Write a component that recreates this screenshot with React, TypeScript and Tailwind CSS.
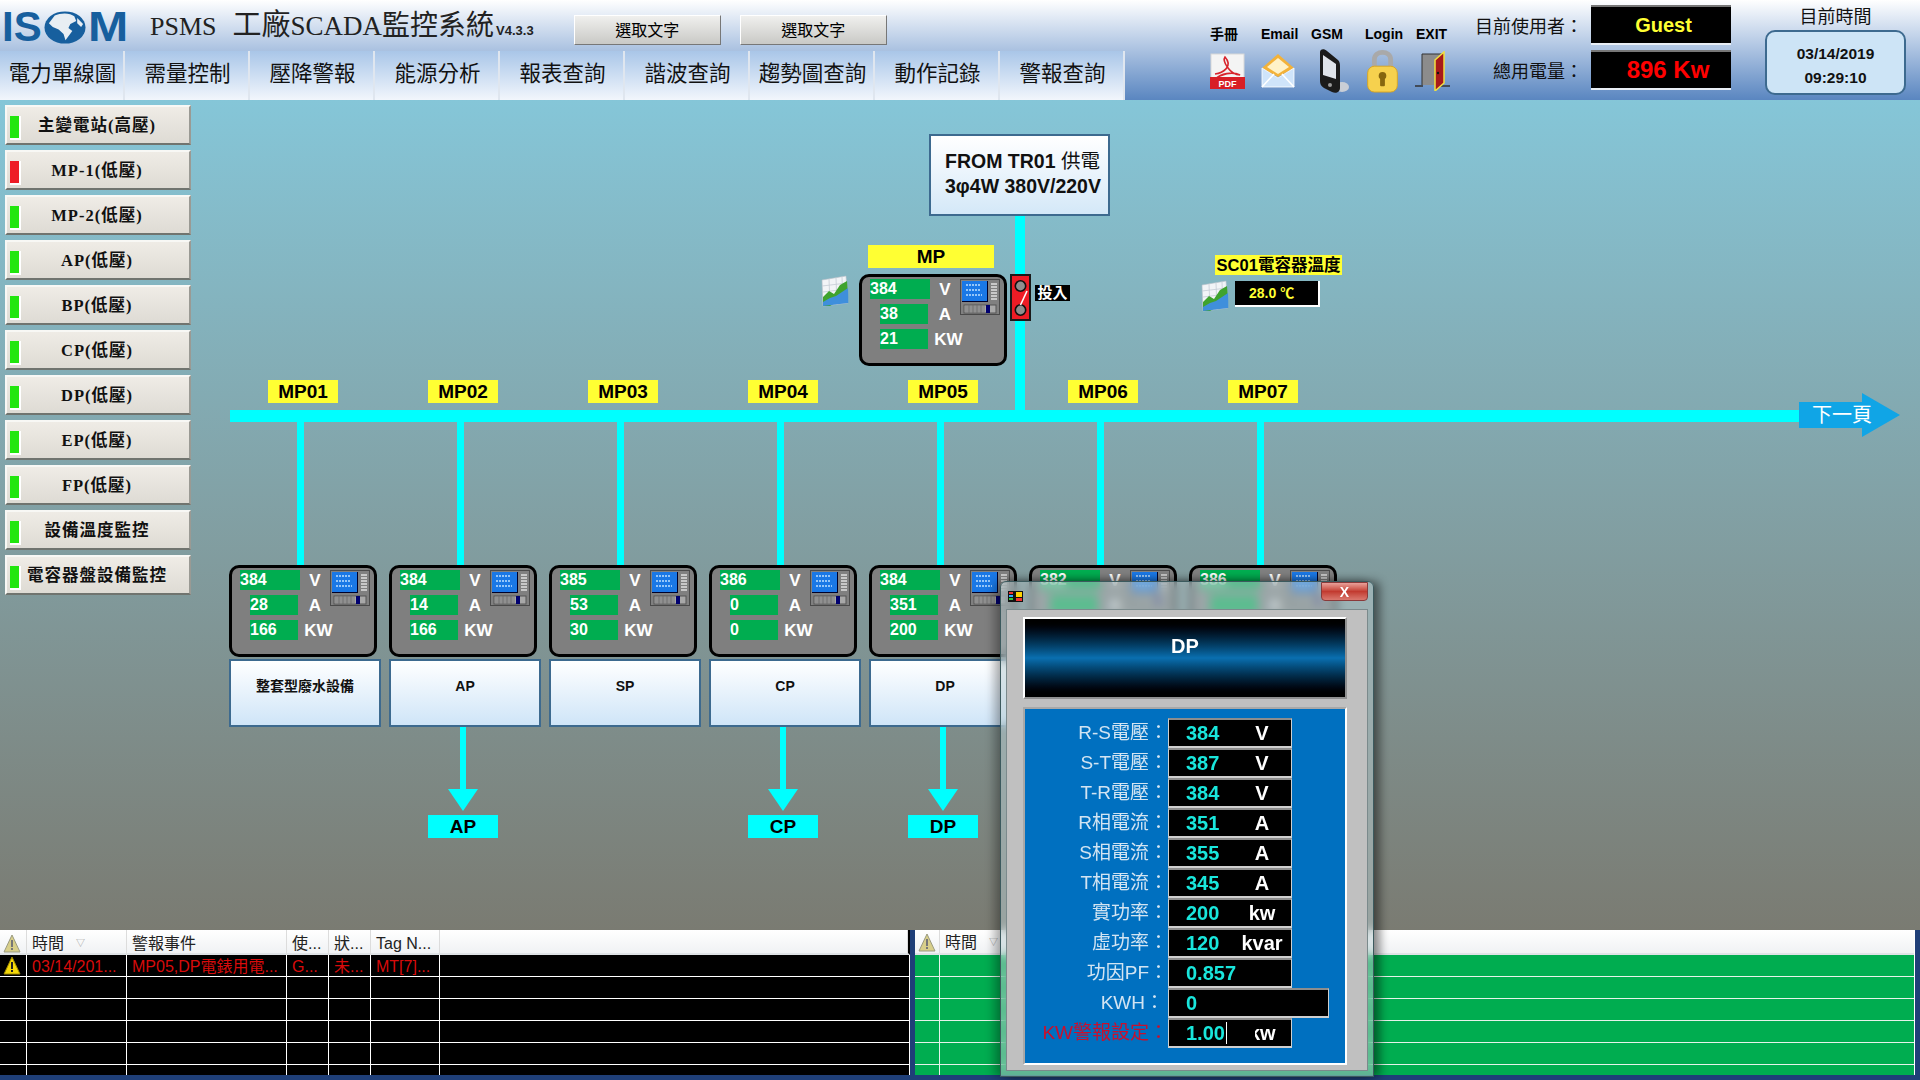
const SANS = "font-['Liberation_Sans','Noto_Sans_CJK_TC',sans-serif]";

const navItems = ["電力單線圖", "需量控制", "壓降警報", "能源分析", "報表查詢", "諧波查詢", "趨勢圖查詢", "動作記錄", "警報查詢"];

const sideItems = [
  { label: "主變電站(高壓)", ok: true },
  { label: "MP-1(低壓)", ok: false },
  { label: "MP-2(低壓)", ok: true },
  { label: "AP(低壓)", ok: true },
  { label: "BP(低壓)", ok: true },
  { label: "CP(低壓)", ok: true },
  { label: "DP(低壓)", ok: true },
  { label: "EP(低壓)", ok: true },
  { label: "FP(低壓)", ok: true },
  { label: "設備溫度監控", ok: true },
  { label: "電容器盤設備監控", ok: true },
];

const feeders = [
  { tag: "MP01", v: "384", a: "28", kw: "166", name: "整套型廢水設備", out: "" },
  { tag: "MP02", v: "384", a: "14", kw: "166", name: "AP", out: "AP" },
  { tag: "MP03", v: "385", a: "53", kw: "30", name: "SP", out: "" },
  { tag: "MP04", v: "386", a: "0", kw: "0", name: "CP", out: "CP" },
  { tag: "MP05", v: "384", a: "351", kw: "200", name: "DP", out: "DP" },
  { tag: "MP06", v: "382", a: "", kw: "", name: "", out: "" },
  { tag: "MP07", v: "386", a: "", kw: "", name: "", out: "" },
];

const readings = [
  { label: "R-S電壓：", value: "384", unit: "V" },
  { label: "S-T電壓：", value: "387", unit: "V" },
  { label: "T-R電壓：", value: "384", unit: "V" },
  { label: "R相電流：", value: "351", unit: "A" },
  { label: "S相電流：", value: "355", unit: "A" },
  { label: "T相電流：", value: "345", unit: "A" },
  { label: "實功率：", value: "200", unit: "kw" },
  { label: "虛功率：", value: "120", unit: "kvar" },
  { label: "功因PF：", value: "0.857", unit: "" },
];

function WarnIcon({ dim }: { dim?: boolean }) {
  return (
    <svg width="18" height="20" viewBox="0 0 18 20">
      <path d="M9 1 L17 18 H1 Z" fill={dim ? "#d8cf8a" : "#f5d90a"} stroke={dim ? "#9a9a80" : "#a08a00"} strokeWidth="1" strokeLinejoin="round" />
      <rect x="8" y="6" width="2" height="7" fill={dim ? "#777" : "#222"} />
      <rect x="8" y="14" width="2" height="2" fill={dim ? "#777" : "#222"} />
    </svg>
  );
}

function DeviceIcon() {
  return (
    <svg width="40" height="36" viewBox="0 0 40 36" className="shrink-0">
      <rect x="0.5" y="0.5" width="39" height="35" fill="#808080" stroke="#4a4a4a" />
      <rect x="2" y="2" width="26" height="21" fill="#000028" />
      <rect x="2" y="2" width="25" height="20" fill="#1a78e6" />
      <path d="M6 6h14M6 11h14M6 16h16" stroke="#bfe0ff" strokeWidth="1.4" strokeDasharray="2 1" />
      <path d="M31 5h6M31 8h6M31 11h6M31 14h6M31 17h6M31 20h6" stroke="#c8c8c8" strokeWidth="2" />
      <rect x="4" y="26" width="32" height="8" fill="#a8a8a8" stroke="#555" />
      <path d="M5 28h20M5 30h20M5 32h20M9 26v8M13 26v8M17 26v8M21 26v8" stroke="#666" strokeWidth="0.7" />
      <rect x="26" y="26" width="4" height="8" fill="#000070" />
    </svg>
  );
}

function ChartIcon() {
  return (
    <svg width="30" height="32" viewBox="0 0 30 32">
      <path d="M2 5 L26 1 L28 28 L3 31 Z" fill="#f2f4f7" stroke="#b8c0c8" strokeWidth="0.6" />
      <path d="M9 4 L10 30M16 3 L17 30M22 2 L23 29M2 11 L27 8M3 17 L27 14" stroke="#c4ccd4" strokeWidth="0.8" />
      <path d="M3 31 L3 22 L9 16 L14 19 L20 10 L27 6 L28 20 L18 26 L10 31 Z" fill="#3fa32e" />
      <path d="M3 31 L3 27 L10 23 L16 21 L28 13 L28.4 28 Z" fill="#3f8fdc" />
    </svg>
  );
}

function SwitchIcon() {
  return (
    <svg width="21" height="47" viewBox="0 0 21 47">
      <rect x="1" y="1" width="19" height="45" fill="#ee1c25" stroke="#1a1a1a" strokeWidth="2" />
      <circle cx="10.5" cy="12" r="5.2" fill="#8f8f8f" stroke="#111" strokeWidth="1.6" />
      <circle cx="10.5" cy="36" r="5.2" fill="#8f8f8f" stroke="#111" strokeWidth="1.6" />
      <path d="M17 17 L10.5 31" stroke="#fff" strokeWidth="1.6" />
    </svg>
  );
}

function Globe() {
  return (
    <svg width="42" height="33" viewBox="0 0 43 43" preserveAspectRatio="none" className="shrink-0">
      <circle cx="21.5" cy="21.5" r="21" fill="#175f9e" />
      <path d="M11 6 C17 2 27 2 31 7 L33 13 L27 17 L25 22 L29 26 L25 33 L22 38 L20 30 L15 24 L9 21 L5 16 Z" fill="#e8eef3" />
      <path d="M34 9 L40 17 L38 21 L34 16 Z" fill="#e8eef3" />
    </svg>
  );
}

function PdfIcon() {
  return (
    <svg width="35" height="36" viewBox="0 0 35 36">
      <rect x="1" y="1" width="33" height="34" fill="#f4f4f4" stroke="#d8d8d8" />
      <path d="M5 21 C12 20 24 14 15 4 C12 8 20 22 30 22 C22 18 11 21 5 26" fill="none" stroke="#d8242c" strokeWidth="1.6" />
      <rect x="0" y="24" width="35" height="12" fill="#d81e26" />
      <text x="17.5" y="33.5" textAnchor="middle" fontSize="9" fontWeight="700" fill="#fff" fontFamily="Liberation Sans">PDF</text>
    </svg>
  );
}

function MailIcon() {
  return (
    <svg width="36" height="36" viewBox="0 0 36 36">
      <path d="M2 15 L18 1 L34 15 L18 24 Z" fill="#f3b23a" />
      <path d="M7 14 L18 5 L29 14 L18 21 Z" fill="#fff2c8" />
      <path d="M2 15 L18 25 L34 15 V34 H2 Z" fill="#cfe4fa" stroke="#fff" strokeWidth="0.8" />
      <path d="M2 34 L14 21 M34 34 L22 21" stroke="#fff" strokeWidth="1.6" />
    </svg>
  );
}

function PhoneIcon() {
  return (
    <svg width="32" height="46" viewBox="0 0 32 46">
      <ellipse cx="24" cy="39" rx="7" ry="5" fill="#c9ced6" />
      <path d="M2 4 C2 1 6 0 9 3 L20 12 C22 14 22 16 22 19 L22 40 C22 44 18 46 14 44 L6 40 C3 38 2 36 2 33 Z" fill="#1b1b1b" />
      <path d="M5 7 L18 16 L18 31 L5 27 Z" fill="#dfe3ea" />
      <circle cx="12" cy="37" r="2" fill="#9a9a9a" />
    </svg>
  );
}

function LockIcon() {
  return (
    <svg width="35" height="44" viewBox="0 0 35 46">
      <path d="M9 20 V11 C9 1 26 1 26 11 V20" fill="none" stroke="#a9a9a9" strokeWidth="5" />
      <rect x="2" y="18" width="31" height="27" rx="7" fill="#f6d14e" stroke="#d9a520" />
      <circle cx="17.5" cy="28" r="4" fill="#86660f" />
      <rect x="15" y="29" width="5" height="10" rx="1" fill="#86660f" />
    </svg>
  );
}

function DoorIcon() {
  return (
    <svg width="36" height="40" viewBox="0 0 36 40">
      <path d="M7 34 V3 H27 V34" fill="#8c8c8c" stroke="#333" strokeWidth="1" />
      <path d="M0 35 H8 M26 35 H35" stroke="#333" strokeWidth="1.4" />
      <path d="M20 9 L29 1 V32 L20 40 Z" fill="#a81a1a" stroke="#f2e040" strokeWidth="1.5" />
      <circle cx="23" cy="22" r="1.2" fill="#111" />
    </svg>
  );
}

function Meter({ v, a, kw }: { v: string; a: string; kw: string }) {
  const rows = [
    { value: v, unit: "V", wide: true },
    { value: a, unit: "A", wide: false },
    { value: kw, unit: "KW", wide: false },
  ];
  return (
    <div className={`flex h-[92px] w-[148px] rounded-[10px] border-[3px] border-black bg-[#7f7f7f] pl-[8px] pt-[2px] ${SANS}`}>
      <div className="flex w-[90px] shrink-0 flex-col gap-[5px]">
        {rows.map((r) => (
          <div key={r.unit} className="flex h-[20px] items-center">
            <div className={`h-[20px] shrink-0 bg-[#00ad50] text-[16px] leading-[20px] font-bold text-white ${r.wide ? "w-[60px]" : "ml-[10px] mr-[2px] w-[48px]"}`}>{r.value}</div>
            <div className={`shrink-0 text-center text-[17px] leading-[21px] font-bold whitespace-nowrap text-white ${r.unit === "KW" ? "w-[37px]" : "w-[30px]"}`}>{r.unit}</div>
          </div>
        ))}
      </div>
      <DeviceIcon />
    </div>
  );
}

function Feeder({ f }: { f: (typeof feeders)[number] }) {
  return (
    <div className={`flex w-[160px] flex-col ${SANS}`}>
      <div className="ml-[39px] h-[23px] w-[70px] bg-[#ffff33] text-center text-[19px] leading-[23px] font-bold text-black">{f.tag}</div>
      <div className="ml-[68px] mt-[7px] h-[155px] w-[7px] bg-[#00ffff]" />
      <Meter v={f.v} a={f.a} kw={f.kw} />
      <div className="mt-[2px] h-[68px] w-[152px] border-2 border-[#3d6a8f] bg-linear-to-b from-white to-[#cfe5f8] pt-[15px] text-center text-[14px] leading-[20px] font-bold text-[#111]">{f.name}</div>
      {f.out && (
        <>
          <div className="ml-[71px] h-[62px] w-[6px] bg-[#00ffff]" />
          <svg width="30" height="22" viewBox="0 0 30 22" className="ml-[59px]">
            <path d="M0 0 H30 L15 22 Z" fill="#00ffff" />
          </svg>
          <div className="ml-[39px] mt-[4px] h-[23px] w-[70px] bg-[#00ffff] text-center text-[19px] leading-[23px] font-bold text-black">{f.out}</div>
        </>
      )}
    </div>
  );
}

function Header() {
  return (
    <header className="flex h-[100px] shrink-0 bg-linear-to-b from-white to-[#5a86c0]">
      <div className="flex w-[1125px] shrink-0 flex-col">
        <div className="flex h-[51px] items-start">
          <div className="mt-[5px] flex h-[44px] w-[133px] items-center font-['Liberation_Sans',sans-serif] text-[42px] leading-none font-bold text-[#175f9e]">
            <span className="ml-[2px] mr-[2px]">IS</span>
            <Globe />
            <span className="ml-[2px] inline-block origin-left scale-x-[1.15]">M</span>
          </div>
          <div className="ml-[17px] mt-[9px] flex h-[32px] items-baseline whitespace-nowrap text-[#222] font-['Liberation_Serif','Noto_Sans_CJK_TC',serif]">
            <span className="text-[26px] leading-[32px]">PSMS</span>
            <span className="ml-[16px] text-[29px] leading-[32px]">工廠</span>
            <span className="text-[27px] leading-[32px]">SCADA</span>
            <span className="text-[28px] leading-[32px]">監控系統</span>
            <span className={`ml-[2px] text-[13px] font-bold ${SANS}`}>V4.3.3</span>
          </div>
          <div className="ml-[40px] mt-[15px] flex gap-[19px]">
            {["選取文字", "選取文字"].map((t, i) => (
              <div key={i} className={`flex h-[30px] w-[147px] items-center justify-center border border-t-white border-l-white border-r-[#777] border-b-[#777] bg-linear-to-b from-[#f0f0ee] to-[#c9c9c6] pt-[1px] text-[16px] text-black ${SANS}`}>
                {t}
              </div>
            ))}
          </div>
        </div>
        <nav className="flex h-[49px]">
          {navItems.map((n) => (
            <div key={n} className={`flex w-[125px] items-center justify-center border-r-2 border-r-[#dfe6ef] bg-linear-to-b from-[#a9c6e8] to-[#f2f6fc] pb-[2px] pl-[2px] text-[21.5px] whitespace-nowrap text-[#111] ${SANS}`}>
              {n}
            </div>
          ))}
        </nav>
      </div>
      <div className={`flex flex-1 text-black ${SANS}`}>
        <div className="ml-[85px] mt-[25px] flex w-[250px] flex-col">
          <div className="flex h-[18px] items-center text-[14px] leading-[18px] font-bold">
            <span className="w-[51px]">手冊</span>
            <span className="w-[50px]">Email</span>
            <span className="w-[54px]">GSM</span>
            <span className="w-[51px]">Login</span>
            <span>EXIT</span>
          </div>
          <div className="mt-[3px] flex h-[50px] items-center">
            <div className="w-[50px]"><PdfIcon /></div>
            <div className="w-[58px]"><MailIcon /></div>
            <div className="w-[47px]"><PhoneIcon /></div>
            <div className="w-[50px]"><LockIcon /></div>
            <div><DoorIcon /></div>
          </div>
        </div>
        <div className="ml-[13px] mt-[5px] flex w-[258px] flex-col gap-[5px]">
          {[
            { label: "目前使用者：", value: "Guest", cls: "pl-[5px] text-[20px] text-[#ffff33]" },
            { label: "總用電量：", value: "896 Kw", cls: "pl-[14px] text-[24px] text-[#ff0000]" },
          ].map((r) => (
            <div key={r.label} className="flex h-[40px] items-center justify-end">
              <span className="mr-[8px] whitespace-nowrap pt-[5px] text-[18px] text-[#111]">{r.label}</span>
              <div className={`flex h-[40px] w-[140px] items-center justify-center border-t-2 border-b-2 border-t-[#777] border-b-[#e8eef5] bg-black font-bold ${r.cls}`}>{r.value}</div>
            </div>
          ))}
        </div>
        <div className="ml-[34px] flex w-[141px] flex-col">
          <div className="h-[30px] pt-[6px] text-center text-[18px] leading-[22px] text-[#111]">目前時間</div>
          <div className="flex h-[65px] flex-col items-center justify-center gap-[6px] rounded-[10px] border-2 border-[#3d6a8f] bg-[#cde4f6] pt-[6px] text-[15.5px] leading-[18px] font-bold text-[#111]">
            <span>03/14/2019</span>
            <span>09:29:10</span>
          </div>
        </div>
      </div>
    </header>
  );
}

function Sidebar() {
  return (
    <aside className="z-10 flex w-[191px] shrink-0 flex-col gap-[5px] pl-[5px] pt-[5px]">
      {sideItems.map((s) => (
        <div key={s.label} className="relative flex h-[40px] w-[186px] items-center justify-center border-2 border-t-[#f8f8f5] border-l-[#f8f8f5] border-r-[#9a9a94] border-b-[#70746f] bg-linear-to-b from-[#efece6] to-[#dedbd4] pr-[2px] pt-[3px] font-['Liberation_Serif','Noto_Sans_CJK_TC',serif] text-[16.5px] font-bold tracking-[1px] whitespace-nowrap text-[#111]">
          <div className={`absolute left-[3px] top-[9px] h-[24px] w-[11px] border-r-2 border-b-2 border-r-white border-b-white ${s.ok ? "bg-[#22e60f]" : "bg-[#ee1c25]"}`} />
          {s.label}
        </div>
      ))}
    </aside>
  );
}

function Diagram() {
  return (
    <div className={`absolute inset-0 ${SANS}`}>
      {/* bus and main feed */}
      <div className="absolute left-[230px] top-[310px] h-[12px] w-[1570px] bg-[#00ffff]" />
      <div className="absolute left-[1015px] top-[116px] h-[200px] w-[10px] bg-[#00ffff]" />

      {/* next page arrow */}
      <div className="absolute left-[1799px] top-[293px] flex items-center">
        <div className="z-10 flex h-[26px] w-[63px] items-center bg-[#10a5e6] pl-[13px] text-[20px] leading-none whitespace-nowrap text-white">下一頁</div>
        <svg width="38" height="44" viewBox="0 0 38 44">
          <path d="M0 0 L38 22 L0 44 Z" fill="#10a5e6" />
        </svg>
      </div>

      {/* source box */}
      <div className="absolute left-[929px] top-[34px] h-[82px] w-[181px] border-2 border-[#3d6a8f] bg-linear-to-b from-white to-[#d4e8f8] pl-[14px] pt-[13px] text-[19.5px] leading-[25px] font-bold whitespace-nowrap text-[#111]">
        <div>FROM TR01 <span className="font-normal">供電</span></div>
        <div>3φ4W 380V/220V</div>
      </div>

      {/* incomer */}
      <div className="absolute left-[868px] top-[145px] h-[23px] w-[126px] bg-[#ffff33] text-center text-[19px] leading-[23px] font-bold text-black">MP</div>
      <div className="absolute left-[820px] top-[175px]"><ChartIcon /></div>
      <div className="absolute left-[859px] top-[174px]"><Meter v="384" a="38" kw="21" /></div>
      <div className="absolute left-[1010px] top-[174px]"><SwitchIcon /></div>
      <div className="absolute left-[1035px] top-[185px] h-[16px] w-[35px] bg-black text-center text-[15px] leading-[16px] font-bold text-white">投入</div>

      {/* capacitor temperature */}
      <div className="absolute left-[1215px] top-[155px] h-[20px] w-[127px] bg-[#ffff33] text-center text-[16.5px] leading-[20px] font-bold whitespace-nowrap text-black">SC01電容器溫度</div>
      <div className="absolute left-[1200px] top-[180px]"><ChartIcon /></div>
      <div className="absolute left-[1235px] top-[181px] h-[26px] w-[85px] border-r-2 border-b-2 border-r-white border-b-white bg-black pl-[14px] text-[14px] leading-[25px] font-bold text-[#ffff33]">28.0 ℃</div>

      {/* feeders */}
      <div className="absolute left-[229px] top-[280px] flex">
        {feeders.map((f) => (
          <Feeder key={f.tag} f={f} />
        ))}
      </div>
    </div>
  );
}

function Dialog() {
  return (
    <div className={`absolute left-[1000px] top-[581px] flex h-[496px] w-[374px] flex-col rounded-t-[6px] border border-[#3c5a5e] bg-[#b7ccd0]/50 shadow-[6px_0_10px_rgba(0,0,0,0.45),-6px_0_10px_rgba(0,0,0,0.3)] backdrop-blur-[5px] ${SANS}`}>
      <div className="flex h-[27px] shrink-0 items-start">
        <svg width="15" height="11" viewBox="0 0 15 11" className="ml-[7px] mt-[9px]">
          <rect width="15" height="11" fill="#111" />
          <rect x="1" y="1" width="4" height="2" fill="#e33" />
          <rect x="1" y="4" width="4" height="2" fill="#3af" />
          <rect x="1" y="7" width="4" height="2" fill="#3c3" />
          <rect x="8" y="1" width="6" height="5" fill="#ffd400" />
          <rect x="8" y="7" width="6" height="3" fill="#e33" />
        </svg>
        <div className="ml-auto mr-[5px] flex h-[19px] w-[47px] items-center justify-center rounded-b-[4px] border border-[#8a3a3a] bg-linear-to-b from-[#e8a09a] via-[#c23a30] to-[#d9776e] text-[14px] leading-none font-bold text-white">X</div>
      </div>
      <div className="mx-[5px] flex h-[462px] flex-col border border-[#7b8a8c] bg-[#c0c0c0] pl-[16px] pr-[20px] pt-[7px]">
        <div className="flex h-[82px] items-center justify-center border-2 border-t-white border-l-white border-r-[#909090] border-b-[#909090] bg-linear-to-b from-black via-[#0a6fb0] to-black pb-[24px] text-[20px] font-bold text-white">DP</div>
        <div className="mt-[8px] h-[358px] border-2 border-t-[#a8a8a8] border-l-[#a8a8a8] border-r-white border-b-white bg-[#0070c0] pt-[9px]">
          {readings.map((r) => (
            <div key={r.label} className="flex h-[30px] items-center">
              <div className="w-[143px] text-right text-[19px] whitespace-nowrap text-[#d2e4f2]">{r.label}</div>
              <div className="flex h-[30px] w-[124px] items-center border border-t-2 border-b-2 border-t-[#8d8d8d] border-b-[#cfcfcf] border-l-[#cfcfcf] border-r-[#cfcfcf] bg-black pl-[17px] text-[20px] font-bold">
                <span className="w-[47px] text-[#19e6dc]">{r.value}</span>
                <span className="w-[58px] text-center text-white">{r.unit}</span>
              </div>
            </div>
          ))}
          <div className="flex h-[30px] items-center">
            <div className="w-[143px] pr-[4px] text-right text-[19px] text-[#d2e4f2]">KWH：</div>
            <div className="flex h-[30px] w-[161px] items-center border border-t-2 border-b-2 border-t-[#8d8d8d] border-b-[#cfcfcf] border-l-[#cfcfcf] border-r-[#cfcfcf] bg-black pl-[17px] text-[20px] font-bold text-[#19e6dc]">0</div>
          </div>
          <div className="flex h-[30px] items-center">
            <div className="w-[143px] text-right text-[19px] whitespace-nowrap text-[#c8102e]">KW警報設定：</div>
            <div className="flex h-[30px] w-[124px] items-center overflow-hidden border border-t-2 border-b-2 border-t-[#8d8d8d] border-b-[#cfcfcf] border-l-[#cfcfcf] border-r-[#cfcfcf] bg-black pl-[17px] text-[20px] font-bold">
              <span className="border-r border-white pr-px leading-[22px] text-[#19e6dc]">1.00</span>
              <span className="relative ml-[22px] block h-[22px] leading-[22px] text-white">
                kw
                <span className="absolute left-0 top-0 block h-[22px] w-[6px] bg-black" />
              </span>
            </div>
          </div>
        </div>
      </div>
    </div>
  );
}

const leftCols = "grid grid-cols-[27px_100px_160px_42px_42px_69px_1fr]";
const headCells = ["", "時間", "警報事件", "使...", "狀...", "Tag N...", ""];
const firstRow = ["", "03/14/201...", "MP05,DP電錶用電...", "G...", "未...", "MT[7]...", ""];

function LeftTable() {
  return (
    <div className={`h-[145px] w-[910px] overflow-hidden bg-black ${SANS}`}>
      <div className={`${leftCols} h-[25px] border-b-2 border-b-[#dfe3e6] border-r-2 border-r-black bg-linear-to-b from-white to-[#f0f2f4] text-[16px] leading-[23px] text-[#222]`}>
        {headCells.map((c, i) => (
          <div key={i} className={`flex items-center whitespace-nowrap border-r border-r-[#dcdcdc] pt-[2px] ${i === 0 ? "pl-[3px]" : "pl-[5px]"}`}>
            {i === 0 ? <WarnIcon dim /> : c}
            {i === 1 && <span className="ml-[12px] text-[9px] text-[#999]">▽</span>}
          </div>
        ))}
      </div>
      <div className={`${leftCols} h-[22px] border-b border-b-white text-[16px] leading-[21px] text-[#d80b0b]`}>
        {firstRow.map((c, i) => (
          <div key={i} className={`flex items-center whitespace-nowrap border-r border-r-white ${i === 0 ? "pl-[3px]" : "pl-[5px] pt-[1px]"}`}>
            {i === 0 ? <WarnIcon /> : c}
          </div>
        ))}
      </div>
      {[0, 1, 2, 3, 4].map((r) => (
        <div key={r} className={`${leftCols} h-[22px] border-b border-b-white`}>
          {firstRow.map((_, i) => (
            <div key={i} className="border-r border-r-white" />
          ))}
        </div>
      ))}
    </div>
  );
}

function RightTable() {
  return (
    <div className={`h-[145px] w-[1000px] overflow-hidden border-r border-r-white bg-[#00ad50] ${SANS}`}>
      <div className="flex h-[25px] border-b-2 border-b-[#dfe3e6] bg-linear-to-b from-white to-[#f0f2f4] text-[16px] leading-[23px] text-[#222]">
        <div className="flex w-[25px] items-center border-r border-r-[#dcdcdc] pl-[3px] pt-[2px]"><WarnIcon dim /></div>
        <div className="flex w-[100px] items-center pl-[5px] pt-[2px]">
          時間<span className="ml-[12px] text-[9px] text-[#999]">▽</span>
        </div>
      </div>
      {[0, 1, 2, 3, 4, 5].map((r) => (
        <div key={r} className="flex h-[22px] border-b border-b-[#e6f3ea]">
          <div className="w-[25px] border-r border-r-[#e6f3ea]" />
        </div>
      ))}
    </div>
  );
}

export default function App() {
  return (
    <div className="relative flex h-[1080px] w-[1920px] flex-col overflow-hidden bg-[#1f3f78]">
      <Header />
      <main className="relative flex h-[830px] shrink-0 bg-linear-to-b from-[#85c6d8] to-[#7a7b72]">
        <Sidebar />
        <Diagram />
      </main>
      <section className="flex gap-[5px]">
        <LeftTable />
        <RightTable />
      </section>
      <Dialog />
    </div>
  );
}
